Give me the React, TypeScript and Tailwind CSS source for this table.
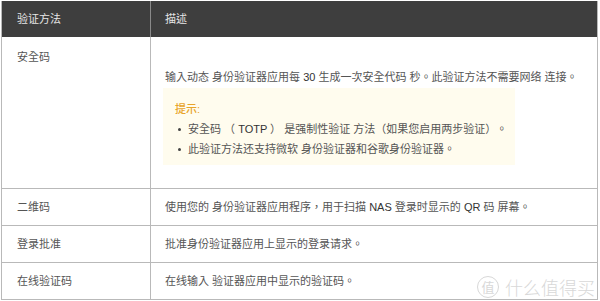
const font = { fontFamily: '"Liberation Sans", "Noto Sans CJK TC", sans-serif' };

// punctuation drawn in the traditional (centred) style, as in the reference
function P({ c = '。' }: { c?: string }) {
  return (
    <span lang="zh-Hant-TW" className="inline-block leading-none" style={{ fontFamily: '"Noto Sans CJK TC", sans-serif' }}>
      {c}
    </span>
  );
}

function Row({ left, children }: { left: string; children: React.ReactNode }) {
  return (
    <div className="flex h-[37px] border-t border-[#b9b9b9]">
      <div className="w-[149px] shrink-0 border-r border-[#b9b9b9] pl-[15px] flex items-center">{left}</div>
      <div className="flex-1 pl-[14px] flex items-center">{children}</div>
    </div>
  );
}

export default function App() {
  return (
    <div lang="zh-Hant-TW" className="relative w-[600px] h-[301px] overflow-hidden bg-white pl-px pt-px" style={font}>
      <div className="w-[597px] border-x border-b border-[#b9b9b9] text-[11px] leading-[18px] text-[#555]">
        {/* header */}
        <div className="flex h-[36px] bg-[#3e3e3e] text-[#e6e6e6]">
          <div className="w-[149px] shrink-0 border-r border-[#8a8a8a] pl-[15px] flex items-center">验证方法</div>
          <div className="flex-1 pl-[14px] flex items-center">描述</div>
        </div>

        {/* 安全码 */}
        <div className="flex h-[151px]">
          <div className="w-[149px] shrink-0 border-r border-[#b9b9b9] pl-[15px] pt-[11px]">安全码</div>
          <div className="flex-1 pl-[14px] pt-[31px]">
            <p>
              输入动态 身份验证器应用每 <span className="text-[#333]">30</span> 生成一次安全代码 秒<P />此验证方法不需要网络 连接<P />
            </p>
            <div className="mt-[2px] ml-[-2px] w-[352px] h-[77px] bg-[#fffcee] pl-[12px] pt-[11px] leading-[20px]">
              <div className="text-[#e8a42a] font-medium">提示:</div>
              <ul>
                <li className="flex items-center h-[20px]">
                  <span className="w-[3px] h-[3px] rounded-full bg-[#444] ml-[3px] mr-[7px]" />
                  <span>
                    安全码 （ <span className="text-[#333]">TOTP</span> ） 是强制性验证 方法（如果您启用两步验证）<P />
                  </span>
                </li>
                <li className="flex items-center h-[20px]">
                  <span className="w-[3px] h-[3px] rounded-full bg-[#444] ml-[3px] mr-[7px]" />
                  <span>此验证方法还支持微软 身份验证器和谷歌身份验证器<P /></span>
                </li>
              </ul>
            </div>
          </div>
        </div>

        <Row left="二维码">
          <span>
            使用您的 身份验证器应用程序<P c="，" />用于扫描 <span className="text-[#333]">NAS</span> 登录时显示的 <span className="text-[#333]">QR</span> 码 屏幕<P />
          </span>
        </Row>
        <Row left="登录批准">
          <span>批准身份验证器应用上显示的登录请求<P /></span>
        </Row>
        <Row left="在线验证码">
          <span>在线输入 验证器应用中显示的验证码<P /></span>
        </Row>
      </div>

      {/* watermark */}
      <div lang="zh-CN" className="absolute left-[477px] top-[276px] h-[22px] flex items-center gap-[6px] whitespace-nowrap text-[#d8d8d8] leading-[22px]">
        <span className="w-[22px] h-[22px] shrink-0 rounded-full border-[1.5px] border-[#d8d8d8] flex items-center justify-center text-[13px] leading-none">值</span>
        <span className="text-[18px] leading-[20px]" style={{ fontFamily: '"Noto Sans CJK SC", sans-serif', fontWeight: 300 }}>什么值得买</span>
      </div>
    </div>
  );
}
